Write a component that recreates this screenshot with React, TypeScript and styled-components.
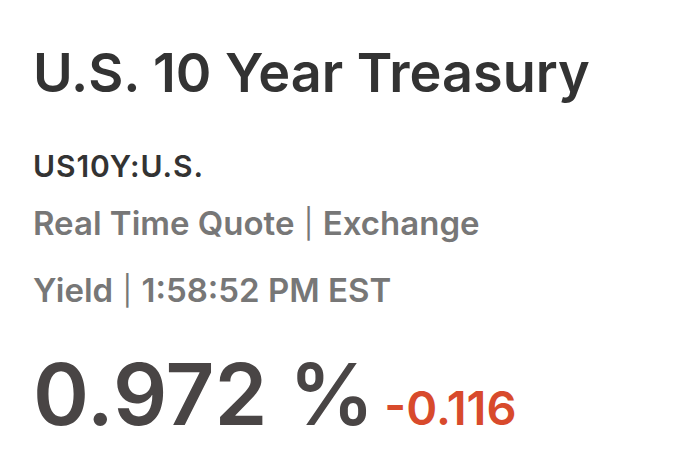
import React from 'react';
import styled, { createGlobalStyle } from 'styled-components';

const cssVarsLocal = {
  dark: '#333333',
  muted: '#777777',
  quote: '#494545',
  negative: '#d84a2c',
  font: '"Inter", "Open Sans", sans-serif'
};

const GlobalStyle = createGlobalStyle`
  html, body {
    margin: 0;
    padding: 0;
    background: #ffffff;
  }
`;

/**
 * Page wrapper with the quote header block.
 */
const Wrapper = styled.main`
  display: flex;
  flex-direction: column;
  padding: 38px 0 0 33px;
  font-family: ${cssVarsLocal.font};
  font-weight: 600;
`;

const Title = styled.h1`
  margin: 0;
  font-size: 54px;
  line-height: 70px;
  font-weight: 600;
  color: ${cssVarsLocal.dark};
`;

const Symbol = styled.div`
  margin-top: 40px;
  font-size: 30px;
  line-height: 36px;
  color: ${cssVarsLocal.dark};
  letter-spacing: 0.9px;
`;

const MetaGroup = styled.div`
  display: flex;
  flex-direction: column;
  gap: 23px;
  margin-top: 18px;
`;

const MetaLine = styled.div`
  font-size: 33px;
  line-height: 42px;
  color: ${cssVarsLocal.muted};
`;

/**
 * Thin separator between meta values.
 */
const Divider = styled.span`
  display: inline-block;
  font-weight: 400;
  font-size: 29px;
  margin: 0 1px;
  transform: translateY(-1px);
`;

const PriceRow = styled.div`
  display: flex;
  align-items: baseline;
  gap: 10px;
  margin-top: 32px;
`;

const Last = styled.span`
  font-size: 85px;
  line-height: 100px;
  color: ${cssVarsLocal.quote};
`;

const Change = styled.span<{ $negative?: boolean }>`
  font-size: 47px;
  color: ${(p) => (p.$negative ? cssVarsLocal.negative : '#2e8b57')};
`;

export default function App() {
  return (
    <>
      <GlobalStyle />
      <Wrapper>
        <Title>U.S. 10 Year Treasury</Title>
        <Symbol>US10Y:U.S.</Symbol>
        <MetaGroup>
          <MetaLine>
            Real Time Quote <Divider>|</Divider> Exchange
          </MetaLine>
          <MetaLine>
            Yield <Divider>|</Divider> 1:58:52 PM EST
          </MetaLine>
        </MetaGroup>
        <PriceRow>
          <Last>0.972 %</Last>
          <Change $negative>-0.116</Change>
        </PriceRow>
      </Wrapper>
    </>
  );
}
